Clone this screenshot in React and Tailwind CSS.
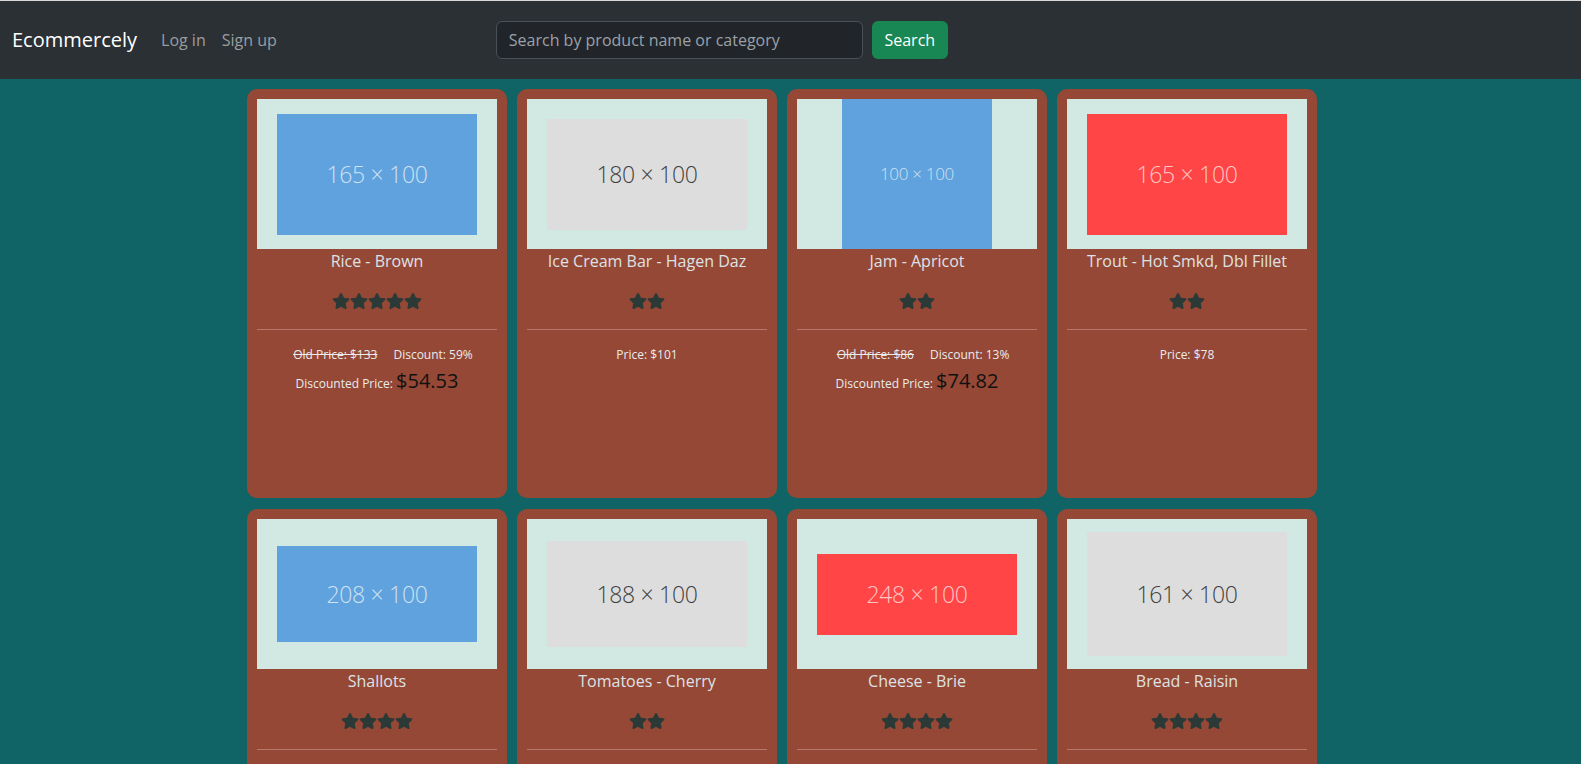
import React from "react";
import { FaStar } from "react-icons/fa";

const products = [
  { name: "Rice - Brown", label: "165 × 100", img: "w-[200px] h-[121px] bg-[#5fa2dd] text-[#cfe1f2] text-[23px]", stars: 5, old: 133, disc: 59, price: "54.53" },
  { name: "Ice Cream Bar - Hagen Daz", label: "180 × 100", img: "w-[200px] h-[111px] bg-[#dddddd] text-[#3f3f3f] text-[23px]", stars: 2, plain: 101 },
  { name: "Jam - Apricot", label: "100 × 100", img: "w-[150px] h-[150px] bg-[#5fa2dd] text-[#cfe1f2] text-[17px]", stars: 2, old: 86, disc: 13, price: "74.82" },
  { name: "Trout - Hot Smkd, Dbl Fillet", label: "165 × 100", img: "w-[200px] h-[121px] bg-[#ff4545] text-[#ffc6c6] text-[23px]", stars: 2, plain: 78 },
  { name: "Shallots", label: "208 × 100", img: "w-[200px] h-[96px] bg-[#5fa2dd] text-[#cfe1f2] text-[23px]", stars: 4, plain: 42 },
  { name: "Tomatoes - Cherry", label: "188 × 100", img: "w-[200px] h-[106px] bg-[#dddddd] text-[#3f3f3f] text-[23px]", stars: 2, plain: 23 },
  { name: "Cheese - Brie", label: "248 × 100", img: "w-[200px] h-[81px] bg-[#ff4545] text-[#ffc6c6] text-[23px]", stars: 4, plain: 65 },
  { name: "Bread - Raisin", label: "161 × 100", img: "w-[200px] h-[124px] bg-[#dddddd] text-[#3f3f3f] text-[23px]", stars: 4, plain: 17 },
];

function Card({ p }) {
  return (
    <div className="w-[260px] h-[409px] rounded-[10px] bg-[#954835] p-[10px] flex flex-col">
      <div className="h-[150px] bg-[#d2e8e2] flex items-center justify-center">
        <div className={`${p.img} flex items-center justify-center font-light tracking-[-0.3px]`}>
          {p.label}
        </div>
      </div>
      <div className="text-[16px] leading-[24px] text-center text-[#dee2e6]">{p.name}</div>
      <div className="mt-[16px] h-[24px] flex items-center justify-center text-[#2b3a36]">
        {Array.from({ length: p.stars }).map((_, i) => (
          <FaStar key={i} size={16} className="w-[18px] h-[16px]" />
        ))}
      </div>
      <div className="mt-[16px] h-px bg-[#b5786b]" />
      {p.plain ? (
        <div className="mt-[16px] text-[12px] leading-[18px] text-center text-[#e9ecef]">
          Price: ${p.plain}
        </div>
      ) : (
        <>
          <div className="mt-[16px] pl-[12px] flex justify-center gap-[16px] text-[12px] leading-[18px] text-[#e9ecef]">
            <span className="line-through">Old Price: ${p.old}</span>
            <span>Discount: {p.disc}%</span>
          </div>
          <div className="mt-[2px] text-center text-[12px] leading-[30px] text-[#e9ecef]">
            Discounted Price: <span className="text-[20px] text-[#111111]">${p.price}</span>
          </div>
        </>
      )}
    </div>
  );
}

export default function App() {
  return (
    <div className="min-h-screen bg-[#106465]" style={{ fontFamily: '"Open Sans", "Noto Sans", sans-serif' }}>
      <div className="h-px bg-[#d9d9d9]" />
      <nav className="h-[78px] bg-[#2b3035] flex items-center pl-[12px]">
        <span className="text-[20px] text-white mr-[16px]">Ecommercely</span>
        <a className="px-[8px] text-[16px] text-[#9a9da0]">Log in</a>
        <a className="px-[8px] text-[16px] text-[#9a9da0]">Sign up</a>
        <div className="ml-[211px] flex items-center gap-[9px]">
          <div className="w-[367px] h-[38px] rounded-[6px] border border-[#495057] bg-[#212529] flex items-center px-[12px] text-[16px] text-[#9aa1a8]">
            Search by product name or category
          </div>
          <button className="h-[38px] w-[76px] rounded-[6px] bg-[#198754] text-white text-[16px]">Search</button>
        </div>
      </nav>
      <main className="pr-[17px] pt-[10px] flex justify-center">
        <div className="w-[1070px] flex flex-wrap gap-x-[10px] gap-y-[11px]">
          {products.map((p) => (
            <Card key={p.name} p={p} />
          ))}
        </div>
      </main>
    </div>
  );
}
